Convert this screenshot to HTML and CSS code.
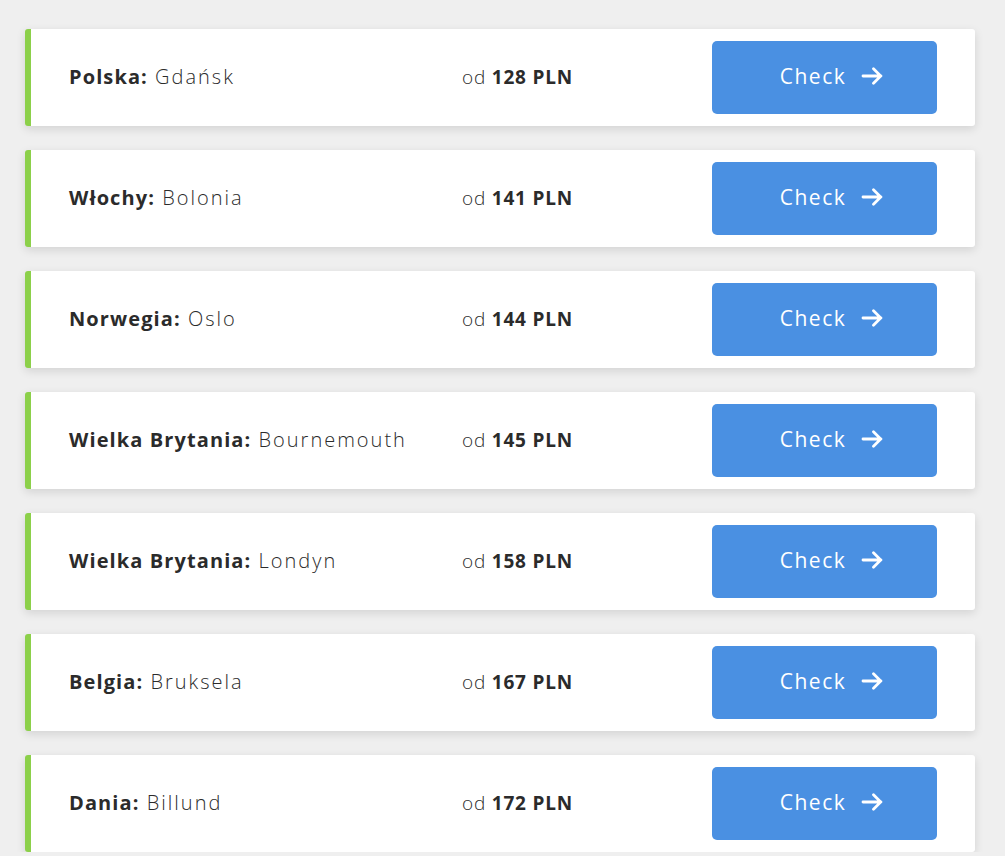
FILE: index.html
```html
<!DOCTYPE html>
<html lang="pl">
<head>
<meta charset="utf-8">
<link rel="stylesheet" href="styles.css">
</head>
<body>
<div class="list">
  <div class="card"><div class="name"><b>Polska:</b> Gdańsk</div><div class="price">od <b>128 PLN</b></div><a class="btn"><span>Check</span><svg viewBox="0 0 22 18" width="22" height="18"><path d="M2 9h18M12.5 1.8 19.7 9l-7.2 7.2" fill="none" stroke="#fff" stroke-width="2.8" stroke-linecap="round" stroke-linejoin="round"/></svg></a></div>
  <div class="card"><div class="name"><b>Włochy:</b> Bolonia</div><div class="price">od <b>141 PLN</b></div><a class="btn"><span>Check</span><svg viewBox="0 0 22 18" width="22" height="18"><path d="M2 9h18M12.5 1.8 19.7 9l-7.2 7.2" fill="none" stroke="#fff" stroke-width="2.8" stroke-linecap="round" stroke-linejoin="round"/></svg></a></div>
  <div class="card"><div class="name"><b>Norwegia:</b> Oslo</div><div class="price">od <b>144 PLN</b></div><a class="btn"><span>Check</span><svg viewBox="0 0 22 18" width="22" height="18"><path d="M2 9h18M12.5 1.8 19.7 9l-7.2 7.2" fill="none" stroke="#fff" stroke-width="2.8" stroke-linecap="round" stroke-linejoin="round"/></svg></a></div>
  <div class="card"><div class="name"><b>Wielka Brytania:</b> Bournemouth</div><div class="price">od <b>145 PLN</b></div><a class="btn"><span>Check</span><svg viewBox="0 0 22 18" width="22" height="18"><path d="M2 9h18M12.5 1.8 19.7 9l-7.2 7.2" fill="none" stroke="#fff" stroke-width="2.8" stroke-linecap="round" stroke-linejoin="round"/></svg></a></div>
  <div class="card"><div class="name"><b>Wielka Brytania:</b> Londyn</div><div class="price">od <b>158 PLN</b></div><a class="btn"><span>Check</span><svg viewBox="0 0 22 18" width="22" height="18"><path d="M2 9h18M12.5 1.8 19.7 9l-7.2 7.2" fill="none" stroke="#fff" stroke-width="2.8" stroke-linecap="round" stroke-linejoin="round"/></svg></a></div>
  <div class="card"><div class="name"><b>Belgia:</b> Bruksela</div><div class="price">od <b>167 PLN</b></div><a class="btn"><span>Check</span><svg viewBox="0 0 22 18" width="22" height="18"><path d="M2 9h18M12.5 1.8 19.7 9l-7.2 7.2" fill="none" stroke="#fff" stroke-width="2.8" stroke-linecap="round" stroke-linejoin="round"/></svg></a></div>
  <div class="card"><div class="name"><b>Dania:</b> Billund</div><div class="price">od <b>172 PLN</b></div><a class="btn"><span>Check</span><svg viewBox="0 0 22 18" width="22" height="18"><path d="M2 9h18M12.5 1.8 19.7 9l-7.2 7.2" fill="none" stroke="#fff" stroke-width="2.8" stroke-linecap="round" stroke-linejoin="round"/></svg></a></div>
</div>
</body>
</html>
```
FILE: styles.css
```css
html, body {
  margin: 0;
  padding: 0;
  background: #efefef;
}
body {
  font-family: "Open Sans", "DejaVu Sans", sans-serif;
  color: #2b2b2b;
}
.list {
  display: flex;
  flex-direction: column;
  gap: 24px;
  width: 950px;
  padding: 29px 0 0 25px;
}
.card {
  display: flex;
  align-items: center;
  height: 97px;
  box-sizing: border-box;
  background: #fff;
  border-left: 6px solid #8cd04a;
  border-radius: 3px;
  box-shadow: 0 3px 10px rgba(0, 0, 0, 0.12);
  padding: 0 38px 0 38px;
}
.name {
  width: 393px;
  font-size: 20px;
  font-weight: 300;
  letter-spacing: 2px;
  white-space: nowrap;
  margin-top: -2px;
}
.name b {
  letter-spacing: 1.1px;
}
.price {
  width: 250px;
  font-size: 19px;
  font-weight: 300;
  letter-spacing: 0.8px;
  margin-top: -1px;
}
.price b {
  letter-spacing: 0.8px;
}
b {
  font-weight: 700;
}
.btn {
  display: flex;
  align-items: center;
  justify-content: center;
  gap: 15px;
  width: 225px;
  height: 73px;
  background: #4a90e2;
  border-radius: 5px;
  color: #fff;
  font-size: 21px;
  font-weight: 400;
  letter-spacing: 1.5px;
  padding-left: 14px;
  box-sizing: border-box;
}
.btn span {
  margin-top: -4px;
}
.btn svg {
  display: block;
  margin-top: -3px;
}
```
